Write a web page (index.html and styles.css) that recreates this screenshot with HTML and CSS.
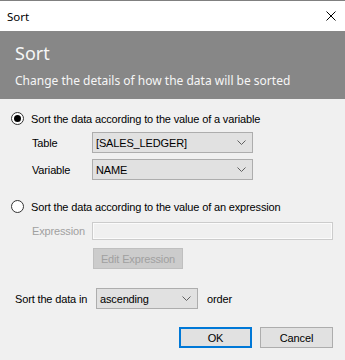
FILE: index.html
```html
<!DOCTYPE html>
<html lang="en">
<head>
    <meta charset="UTF-8">
    <title>Sort</title>
    <link rel="stylesheet" href="styles.css">
</head>
<body>
    <div class="window">
        <div class="titlebar">
            <span class="caption">Sort</span>
            <svg class="close" width="10" height="10" viewBox="0 0 10 10">
                <path d="M0.5 0.5 L9.5 9.5 M9.5 0.5 L0.5 9.5" stroke="#000" stroke-width="1" fill="none"/>
            </svg>
        </div>
        <div class="header">
            <div class="head-title">Sort</div>
            <div class="head-sub">Change the details of how the data will be sorted</div>
        </div>
        <div class="content">
            <div class="radio-row first">
                <span class="radio checked"></span>
                <span>Sort the data according to the value of a variable</span>
            </div>
            <div class="fields">
                <span class="label">Table</span>
                <div class="combo">
                    <span>[SALES_LEDGER]</span>
                    <svg class="chev" width="9" height="5" viewBox="0 0 9 5"><polyline points="0.5,0.5 4.5,4.5 8.5,0.5" stroke="#606060" fill="none"/></svg>
                </div>
                <span class="label">Variable</span>
                <div class="combo">
                    <span>NAME</span>
                    <svg class="chev" width="9" height="5" viewBox="0 0 9 5"><polyline points="0.5,0.5 4.5,4.5 8.5,0.5" stroke="#606060" fill="none"/></svg>
                </div>
            </div>
            <div class="radio-row second">
                <span class="radio"></span>
                <span>Sort the data according to the value of an expression</span>
            </div>
            <div class="fields expr">
                <span class="label disabled">Expression</span>
                <div class="textbox"></div>
                <span></span>
                <div><button class="btn edit" disabled>Edit Expression</button></div>
            </div>
            <div class="order-row">
                <span class="order-label">Sort the data in</span>
                <div class="combo small">
                    <span>ascending</span>
                    <svg class="chev" width="9" height="5" viewBox="0 0 9 5"><polyline points="0.5,0.5 4.5,4.5 8.5,0.5" stroke="#606060" fill="none"/></svg>
                </div>
                <span class="order-word">order</span>
            </div>
            <div class="actions">
                <button class="btn ok">OK</button>
                <button class="btn">Cancel</button>
            </div>
        </div>
    </div>
</body>
</html>
```
FILE: styles.css
```css
body{
    margin:0;
    padding:0;
    background-color:#f0f0f0;
    font-family:"Liberation Sans", Arial, sans-serif;
    font-size:11px;
    letter-spacing:-0.15px;
    color:#000;
}
.window{
    width:345px;
    height:360px;
    border-top:1px solid #808080;
    box-sizing:border-box;
    overflow:hidden;
}
.titlebar{
    height:30px;
    background-color:#fff;
    display:flex;
    align-items:center;
    padding:0 9px 0 7px;
    font-family:"Noto Sans", "Open Sans", sans-serif;
    font-size:11.5px;
    letter-spacing:0;
}
.caption{
    flex:1;
}
.close{
    display:block;
}
.header{
    height:68px;
    box-sizing:border-box;
    background-color:#878787;
    color:#f6f6f6;
    padding:10px 15px 0 15px;
    font-family:"Noto Sans", "Open Sans", sans-serif;
    letter-spacing:0;
}
.head-title{
    font-size:18px;
    line-height:24px;
}
.head-sub{
    font-size:12px;
    margin-top:8px;
    line-height:16px;
}
.radio-row{
    display:flex;
    align-items:center;
    height:13px;
    padding-left:11px;
    gap:7px;
}
.radio-row.first{
    margin-top:13px;
}
.radio-row.second{
    margin-top:20px;
}
.radio{
    width:13px;
    height:13px;
    box-sizing:border-box;
    border:1px solid #333;
    border-radius:50%;
    background-color:#fff;
    display:flex;
    align-items:center;
    justify-content:center;
}
.radio.checked::after{
    content:"";
    width:7px;
    height:7px;
    border-radius:50%;
    background-color:#000;
}
.fields{
    display:grid;
    grid-template-columns:60px 161px;
    grid-auto-rows:21px;
    row-gap:6px;
    align-items:center;
    padding-left:32px;
    margin-top:7px;
}
.fields.expr{
    grid-template-columns:60px 241px;
    grid-template-rows:18px 21px;
    row-gap:8px;
    margin-top:9px;
}
.label.disabled{
    color:#a0a0a0;
}
.combo{
    height:21px;
    box-sizing:border-box;
    border:1px solid #adadad;
    background-color:#e1e1e1;
    display:flex;
    align-items:center;
    justify-content:space-between;
    padding:0 6px 0 3px;
}
.combo.small{
    width:102px;
}
.chev{
    display:block;
}
.textbox{
    height:18px;
    box-sizing:border-box;
    border:1px solid #cccccc;
    box-shadow:inset 0 0 0 1px #fbfbfb;
    background-color:#f0f0f0;
}
.btn{
    height:21px;
    box-sizing:border-box;
    border:1px solid #adadad;
    background-color:#e1e1e1;
    font-family:"Liberation Sans", Arial, sans-serif;
    font-size:11px;
    letter-spacing:-0.15px;
    color:#000;
    padding:0;
    margin:0;
}
.btn.edit{
    width:90px;
    margin-left:1px;
    background-color:#cccccc;
    border-color:#bfbfbf;
    color:#a0a0a0;
}
.order-row{
    display:flex;
    align-items:center;
    margin-top:19px;
    padding-left:15px;
}
.order-label{
    width:81px;
}
.order-word{
    margin-left:9px;
}
.actions{
    display:flex;
    justify-content:flex-end;
    gap:8px;
    margin-top:18px;
    padding-right:12px;
}
.actions .btn{
    width:73px;
}
.btn.ok{
    border:2px solid #0078d7;
}
```
